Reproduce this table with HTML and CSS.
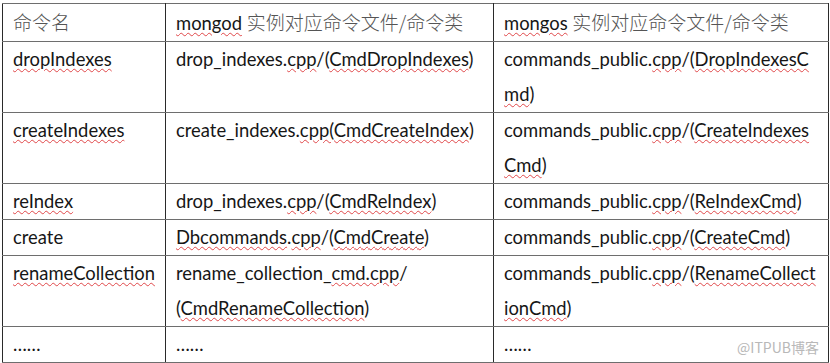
FILE: index.html
```html
<!DOCTYPE html>
<html lang="zh">
<head>
<meta charset="utf-8">
<link rel="stylesheet" href="styles.css">
</head>
<body>
<div class="wrap">
<table class="cmds">
  <colgroup><col class="c1"><col class="c2"><col class="c3"></colgroup>
  <tr>
    <td><span class="zh">命令名</span></td>
    <td><span class="sp">mongod</span> <span class="zh">实例对应命令文件/命令类</span></td>
    <td><span class="sp">mongos</span> <span class="zh">实例对应命令文件/命令类</span></td>
  </tr>
  <tr>
    <td><span class="sp">dropIndexes</span></td>
    <td>drop_indexes.<span class="sp">cpp</span>/(<span class="sp">CmdDropIndexes</span>)</td>
    <td>commands_public.<span class="sp">cpp</span>/(<span class="sp">DropIndexesC</span><br><span class="sp">md</span>)</td>
  </tr>
  <tr>
    <td><span class="sp">createIndexes</span></td>
    <td>create_indexes.<span class="sp">cpp(CmdCreateIndex</span>)</td>
    <td>commands_public.<span class="sp">cpp</span>/(<span class="sp">CreateIndexes</span><br><span class="sp">Cmd</span>)</td>
  </tr>
  <tr>
    <td><span class="sp">reIndex</span></td>
    <td>drop_indexes.<span class="sp">cpp</span>/(<span class="sp">CmdReIndex</span>)</td>
    <td>commands_public.<span class="sp">cpp</span>/(<span class="sp">ReIndexCmd</span>)</td>
  </tr>
  <tr>
    <td>create</td>
    <td><span class="sp">Dbcommands</span>.<span class="sp">cpp</span>/(<span class="sp">CmdCreate</span>)</td>
    <td>commands_public.<span class="sp">cpp</span>/(<span class="sp">CreateCmd</span>)</td>
  </tr>
  <tr>
    <td><span class="sp">renameCollection</span></td>
    <td>rename_collection_<span class="sp">cmd.cpp</span>/<br>(<span class="sp">CmdRenameCollection</span>)</td>
    <td>commands_public.<span class="sp">cpp</span>/(<span class="sp">RenameCollect</span><br><span class="sp">ionCmd</span>)</td>
  </tr>
  <tr>
    <td>……</td>
    <td>……</td>
    <td>……</td>
  </tr>
</table>
<div class="mark">@ITPUB博客</div>
<div class="thumb"></div>
</div>
</body>
</html>
```
FILE: styles.css
```css
html, body {
  margin: 0;
  padding: 0;
  background: #fff;
}
body {
  padding: 3px 0 0 2px;
}
.wrap {
  position: relative;
  width: 826px;
}
.cmds {
  border-collapse: collapse;
  table-layout: fixed;
  width: 826px;
  font-family: Lato, "Noto Sans CJK SC", sans-serif;
  font-size: 18.4px;
  color: #161616;
}
.c1 { width: 163px; }
.c2 { width: 328px; }
.c3 { width: 335px; }
.cmds td {
  border-top: 1px solid #6e6e6e;
  border-bottom: 1px solid #6e6e6e;
  border-left: 1px solid #2a2a2a;
  border-right: 1px solid #2a2a2a;
  padding: 0 9px 0 10px;
  line-height: 35px;
  height: 35px;
  vertical-align: top;
  white-space: nowrap;
  overflow: hidden;
}
.zh {
  font-family: "Noto Sans CJK SC", sans-serif;
  font-size: 19px;
  color: #555;
  font-weight: 300;
}
.sp {
  text-decoration: underline wavy #e0484a;
  text-decoration-thickness: 1px;
  text-underline-offset: 2px;
}
.mark {
  position: absolute;
  right: 9px;
  bottom: 6px;
  font-family: "Noto Sans CJK SC", sans-serif;
  font-size: 14px;
  color: #b8b8b8;
}
.thumb {
  position: absolute;
  left: 391px;
  bottom: -2px;
  width: 30px;
  height: 2px;
  background: #a0a0a0;
}
```
